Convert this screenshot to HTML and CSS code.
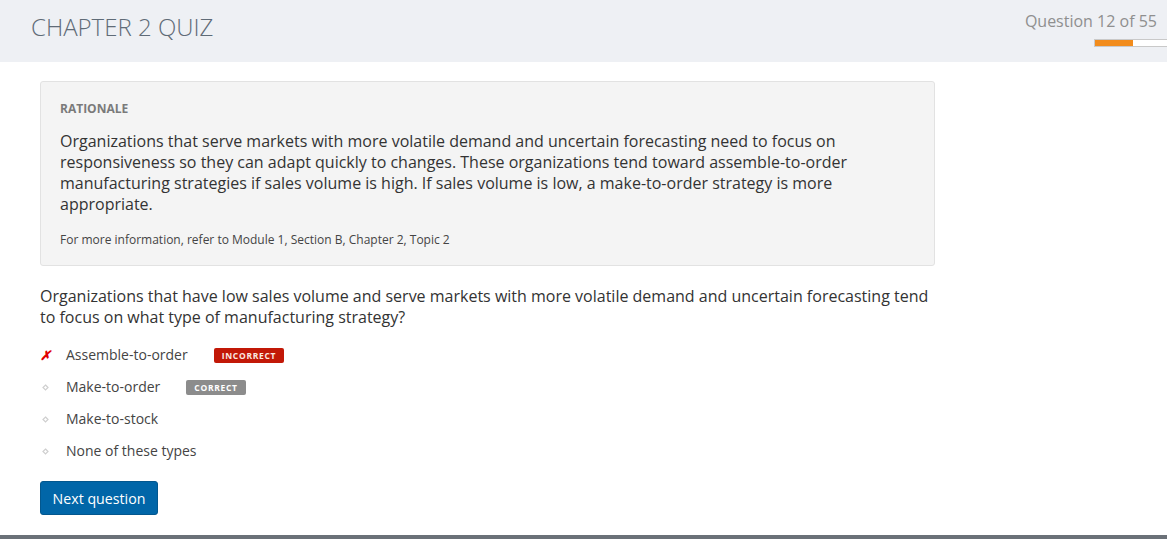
FILE: index.html
```html
<!DOCTYPE html>
<html>
<head>
<meta charset="utf-8">
<link rel="stylesheet" href="styles.css">
</head>
<body>
<header class="topbar">
  <h1 class="title">CHAPTER 2 QUIZ</h1>
  <div class="progress-wrap">
    <div class="counter">Question 12 of 55</div>
    <div class="progress"><div class="progress-fill" style="width:38px"></div></div>
  </div>
</header>
<main class="content">
  <section class="rationale">
    <div class="rationale-label">RATIONALE</div>
    <p class="rationale-text">Organizations that serve markets with more volatile demand and uncertain forecasting need to focus on responsiveness so they can adapt quickly to changes. These organizations tend toward assemble-to-order manufacturing strategies if sales volume is high. If sales volume is low, a make-to-order strategy is more appropriate.</p>
    <p class="rationale-ref">For more information, refer to Module 1, Section B, Chapter 2, Topic 2</p>
  </section>
  <p class="question">Organizations that have low sales volume and serve markets with more volatile demand and uncertain forecasting tend to focus on what type of manufacturing strategy?</p>
  <ul class="options">
    <li class="option"><span class="mark mark-x">&#x2717;</span><span class="opt-text">Assemble-to-order</span><span class="badge badge-wrong">INCORRECT</span></li>
    <li class="option"><span class="mark"><svg width="7" height="7" viewBox="0 0 7 7"><path d="M3.5 1 L6 3.5 L3.5 6 L1 3.5 Z" fill="none" stroke="#cfcfcf" stroke-width="1.2"/></svg></span><span class="opt-text">Make-to-order</span><span class="badge badge-right">CORRECT</span></li>
    <li class="option"><span class="mark"><svg width="7" height="7" viewBox="0 0 7 7"><path d="M3.5 1 L6 3.5 L3.5 6 L1 3.5 Z" fill="none" stroke="#cfcfcf" stroke-width="1.2"/></svg></span><span class="opt-text">Make-to-stock</span></li>
    <li class="option"><span class="mark"><svg width="7" height="7" viewBox="0 0 7 7"><path d="M3.5 1 L6 3.5 L3.5 6 L1 3.5 Z" fill="none" stroke="#cfcfcf" stroke-width="1.2"/></svg></span><span class="opt-text">None of these types</span></li>
  </ul>
  <button class="next-btn">Next question</button>
</main>
<footer class="bottom-bar"></footer>
</body>
</html>
```
FILE: styles.css
```css
* { box-sizing: border-box; }
html, body { margin: 0; padding: 0; }
body {
  font-family: "Open Sans", "Noto Sans", sans-serif;
  color: #333;
  background: #fff;
  width: 1167px;
  height: 539px;
  overflow: hidden;
  display: flex;
  flex-direction: column;
}
.topbar {
  height: 62px;
  background: #eef0f4;
  display: flex;
  justify-content: space-between;
  align-items: flex-start;
  padding-left: 31px;
}
.title {
  margin: 11px 0 0 0;
  font-weight: 300;
  font-size: 24px;
  color: #5f6b77;
  letter-spacing: 0;
  line-height: 32px;
}
.progress-wrap {
  display: flex;
  flex-direction: column;
  align-items: flex-end;
  padding-top: 10px;
}
.counter {
  font-size: 16px;
  color: #8f8f8f;
  line-height: 22px;
  padding-right: 10px;
}
.progress {
  margin-top: 7px;
  width: 73px;
  height: 8px;
  background: #fff;
  border: 1px solid #c9c9c9;
  border-right: none;
  display: flex;
}
.progress-fill {
  background: #f28c1c;
  height: 100%;
}
.content {
  flex: 1;
  padding: 19px 0 0 40px;
  width: 935px;
}
.rationale {
  background: #f4f4f4;
  border: 1px solid #e2e2e2;
  border-radius: 3px;
  padding: 19px 19px 17px 19px;
}
.rationale-label {
  font-size: 12px;
  font-weight: 700;
  color: #7a7a7a;
  line-height: 16px;
}
.rationale-text {
  margin: 14px 0 0 0;
  font-size: 16px;
  line-height: 21px;
  color: #333;
}
.rationale-ref {
  margin: 16px 0 0 0;
  font-size: 12px;
  line-height: 17px;
  color: #444;
}
.question {
  margin: 20px 0 0 0;
  font-size: 16px;
  line-height: 21px;
  color: #333;
}
.options {
  list-style: none;
  margin: 11px 0 0 0;
  padding: 0;
}
.option {
  display: flex;
  align-items: center;
  height: 32px;
  font-size: 14px;
  color: #444;
}
.mark {
  width: 26px;
  display: flex;
  align-items: center;
  padding-left: 2px;
}
.mark-x {
  color: #e00000;
  font-size: 13px;
  font-style: italic;
  font-weight: 700;
  padding-left: 0;
}
.opt-text {
  line-height: 20px;
}
.badge {
  display: inline-block;
  margin-left: 26px;
  font-size: 8.5px;
  font-weight: 700;
  letter-spacing: 0.7px;
  color: #fff;
  border-radius: 2px;
  padding: 0 8px;
  height: 15px;
  line-height: 15px;
}
.badge-wrong { background: #c21807; color: #fbe9e0; }
.badge-right { background: #8c8c8c; }
.next-btn {
  margin-top: 14px;
  font-family: "Open Sans", "Noto Sans", sans-serif;
  font-size: 14.2px;
  color: #fff;
  background: #0166a8;
  border: 1px solid #03578e;
  border-radius: 3px;
  height: 34px;
  width: 118px;
  padding: 0;
  cursor: pointer;
}
.bottom-bar {
  height: 4px;
  background: #6b7178;
}
```
